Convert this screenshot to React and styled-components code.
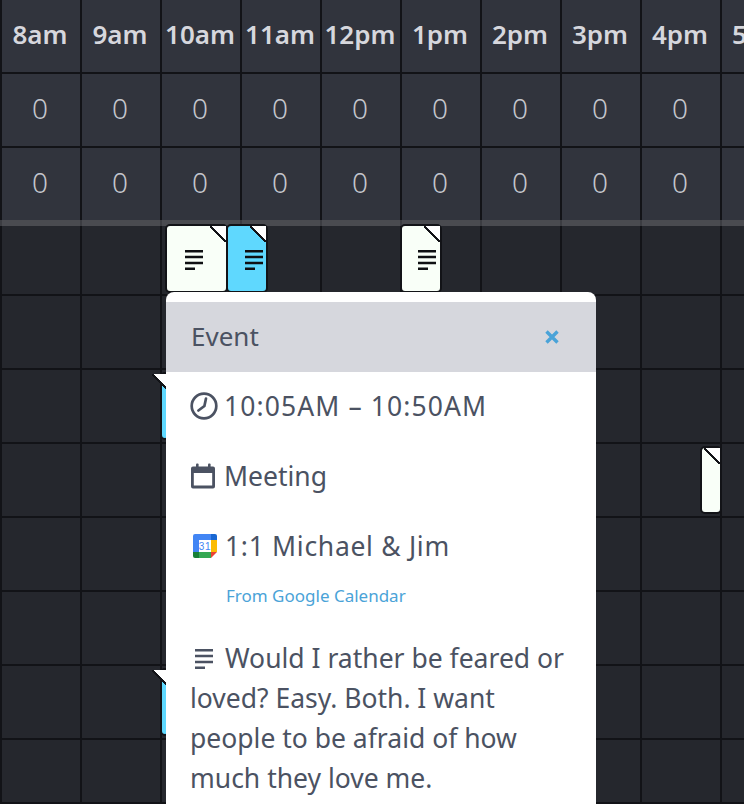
import styled, { createGlobalStyle } from "styled-components"

const hours = ["8am", "9am", "10am", "11am", "12pm", "1pm", "2pm", "3pm", "4pm", "5pm"]

const FONT = `"Noto Sans", "Open Sans", sans-serif`

function NoteLines({ weight = 2.4 }) {
    return (
        <svg width="18" height="20" viewBox="0 0 18 20" fill="none" stroke="currentColor" strokeWidth={weight}>
            <path d="M0 1.3h18M0 7h18M0 13h18M0 18.7h10" />
        </svg>
    )
}

function ClockIcon() {
    return (
        <svg width="28" height="28" viewBox="0 0 28 28" fill="none" stroke="#4b5262" strokeWidth="2.7" strokeLinecap="round">
            <circle cx="14" cy="14" r="12.3" />
            <path d="M16 6.5l-1.6 7.5-6 4.5" />
        </svg>
    )
}

function CalendarIcon() {
    return (
        <svg width="26" height="26" viewBox="0 0 26 26" fill="#4b5262">
            <path fillRule="evenodd" d="M3 3.5h20a2 2 0 0 1 2 2v18a2 2 0 0 1-2 2H3a2 2 0 0 1-2-2v-18a2 2 0 0 1 2-2zm.8 6.5v12.6h18.4V10z" />
            <rect x="6" y="0.5" width="2.6" height="5" rx="1" />
            <rect x="18" y="0.5" width="2.6" height="5" rx="1" />
        </svg>
    )
}

function CloseIcon() {
    return (
        <svg width="14" height="14" viewBox="0 0 14 14" fill="none" stroke="#4aa3d8" strokeWidth="3.4">
            <path d="M1.5 1.5l11 11M12.5 1.5l-11 11" />
        </svg>
    )
}

function GoogleCalendarIcon() {
    return (
        <svg width="24" height="24" viewBox="0 0 24 24">
            <path d="M2 0h16v6H6v12H0V2a2 2 0 0 1 2-2z" fill="#4285f4" />
            <path d="M18 0h4a2 2 0 0 1 2 2v4h-6z" fill="#1967d2" />
            <rect x="18" y="6" width="6" height="12" fill="#fbbc04" />
            <rect x="6" y="18" width="12" height="6" fill="#34a853" />
            <path d="M0 18h6v6H2a2 2 0 0 1-2-2z" fill="#188038" />
            <path d="M18 18h6l-6 6z" fill="#ea4335" />
            <rect x="6" y="6" width="12" height="12" fill="#fff" />
            <text x="12" y="15.7" textAnchor="middle" fontSize="10" fontFamily="Liberation Sans, sans-serif" fill="#4285f4">31</text>
        </svg>
    )
}

export default function App() {
    return (
        <Page>
            <GlobalStyle />
            <Head>
                <Row>
                    {hours.map((h) => <HourCell key={h}>{h}</HourCell>)}
                </Row>
                <Row>
                    {hours.map((h) => <CountCell key={h}>{h === "5pm" ? "" : "0"}</CountCell>)}
                </Row>
                <Row>
                    {hours.map((h) => <CountCell key={h}>{h === "5pm" ? "" : "0"}</CountCell>)}
                </Row>
            </Head>
            <Divider />
            <Body>
                <BodyRow $height={70} />
                {[...Array(6)].map((_, i) => <BodyRow key={i} $height={74} />)}
                <BodyRow $height={64} />

                <EventChip $x={165} $y={-2} $w={63} $h={69} $pad={18}><NoteLines /></EventChip>
                <EventChip $x={226} $y={-2} $w={42} $h={69} $pad={17} $blue><NoteLines /></EventChip>
                <EventChip $x={400} $y={-2} $w={42} $h={69} $pad={16}><NoteLines /></EventChip>
                <EventChip $x={700} $y={220} $w={22} $h={68} />
                <EventChip $x={160} $y={146} $w={10} $h={68} $blue />
                <EventChip $x={160} $y={442} $w={10} $h={68} $blue />

                <Popover>
                    <PopoverHeader>
                        <PopoverTitle>Event</PopoverTitle>
                        <CloseIcon />
                    </PopoverHeader>
                    <PopoverBody>
                        <InfoLine $top={14} $gap={6} $spacing={1.1}><ClockIcon />10:05AM – 10:50AM</InfoLine>
                        <InfoLine $top={30} $gap={8}><CalendarIcon />Meeting</InfoLine>
                        <InfoLine $top={30} $gap={8} $indent={3} $spacing={0.7}><GoogleCalendarIcon />1:1 Michael &amp; Jim</InfoLine>
                        <Source>From Google Calendar</Source>
                        <Notes><NotesIcon><NoteLines /></NotesIcon>Would I rather be feared or loved? Easy. Both. I want people to be afraid of how much they love me.</Notes>
                    </PopoverBody>
                </Popover>
            </Body>
        </Page>
    )
}

const GlobalStyle = createGlobalStyle`
    html, body {
        margin: 0;
        padding: 0;
        height: 804px;
        overflow: hidden;
        background-color: #121317;
    }
`

const Page = styled.div`
    width: 744px;
    height: 804px;
    overflow: hidden;
    font-family: ${FONT};
`

const Head = styled.div`
    display: flex;
    flex-direction: column;
    gap: 2px;
    background-color: #121317;
`

const Row = styled.div`
    display: grid;
    grid-template-columns: repeat(10, 80px);
    height: 72px;
`

const HourCell = styled.div`
    display: flex;
    align-items: center;
    justify-content: center;
    box-sizing: border-box;
    padding: 0 2px 4px 0;
    border-left: 2px solid #121317;
    background-color: #31343d;
    color: #d6d7dd;
    font-size: 26px;
    font-weight: 600;
    white-space: nowrap;
`

const CountCell = styled.div`
    display: flex;
    align-items: center;
    justify-content: center;
    box-sizing: border-box;
    padding: 0 2px 5px 0;
    border-left: 2px solid #121317;
    background-color: #31343d;
    color: #c4c6cd;
    font-size: 28px;
    font-weight: 300;
`

const Divider = styled.div`
    height: 6px;
    background-color: #4a4b50;
    background-image: repeating-linear-gradient(
        to right,
        #3c3d42 0,
        #3c3d42 2px,
        transparent 2px,
        transparent 80px
    );
`

const Body = styled.div`
    position: relative;
    height: 578px;
`

const BodyRow = styled.div`
    box-sizing: border-box;
    height: ${(p) => p.$height}px;
    border-bottom: 2px solid #121317;
    background-color: #25272d;
    background-image: repeating-linear-gradient(
        to right,
        #121317 0,
        #121317 2px,
        transparent 2px,
        transparent 80px
    );
`

const EventChip = styled.div`
    position: absolute;
    left: ${(p) => p.$x}px;
    top: ${(p) => p.$y}px;
    width: ${(p) => p.$w}px;
    height: ${(p) => p.$h}px;
    box-sizing: border-box;
    display: flex;
    align-items: center;
    padding: 3px 0 0 ${(p) => p.$pad || 0}px;
    color: #0f1013;
    border: 2px solid #121317;
    border-radius: 5px;
    background-color: ${(p) => (p.$blue ? "#5fd8fe" : "#f9fff8")};

    &::after {
        content: "";
        position: absolute;
        top: 0;
        right: 0;
        width: 16px;
        height: 16px;
        background: linear-gradient(
            to top right,
            transparent 46%,
            #121317 46%,
            #121317 54%,
            #fff 54%
        );
    }
`

const Popover = styled.div`
    position: absolute;
    left: 166px;
    top: 66px;
    width: 430px;
    height: 560px;
    box-sizing: border-box;
    padding-top: 10px;
    border-radius: 8px 8px 0 0;
    background-color: #fff;
`

const PopoverHeader = styled.div`
    display: flex;
    align-items: center;
    justify-content: space-between;
    height: 70px;
    padding: 0 37px 0 25px;
    background-color: #d6d7dd;
`

const PopoverTitle = styled.div`
    padding-bottom: 3px;
    color: #4b5262;
    font-size: 26px;
`

const PopoverBody = styled.div`
    padding: 0 24px;
    color: #4b5262;
    font-size: 26.5px;
`

const InfoLine = styled.div`
    display: flex;
    align-items: center;
    gap: ${(p) => p.$gap}px;
    height: 40px;
    margin-top: ${(p) => p.$top}px;
    padding-left: ${(p) => p.$indent || 0}px;
    letter-spacing: ${(p) => p.$spacing || 0}px;
    white-space: nowrap;
`

const Source = styled.div`
    margin: 18px 0 0 36px;
    color: #4aa3d8;
    font-size: 17px;
    line-height: 24px;
`

const Notes = styled.div`
    margin-top: 30px;
    line-height: 40px;
`

const NotesIcon = styled.span`
    display: inline-block;
    margin: 0 12px 0 5px;
    vertical-align: -1px;
    line-height: 0;
`
